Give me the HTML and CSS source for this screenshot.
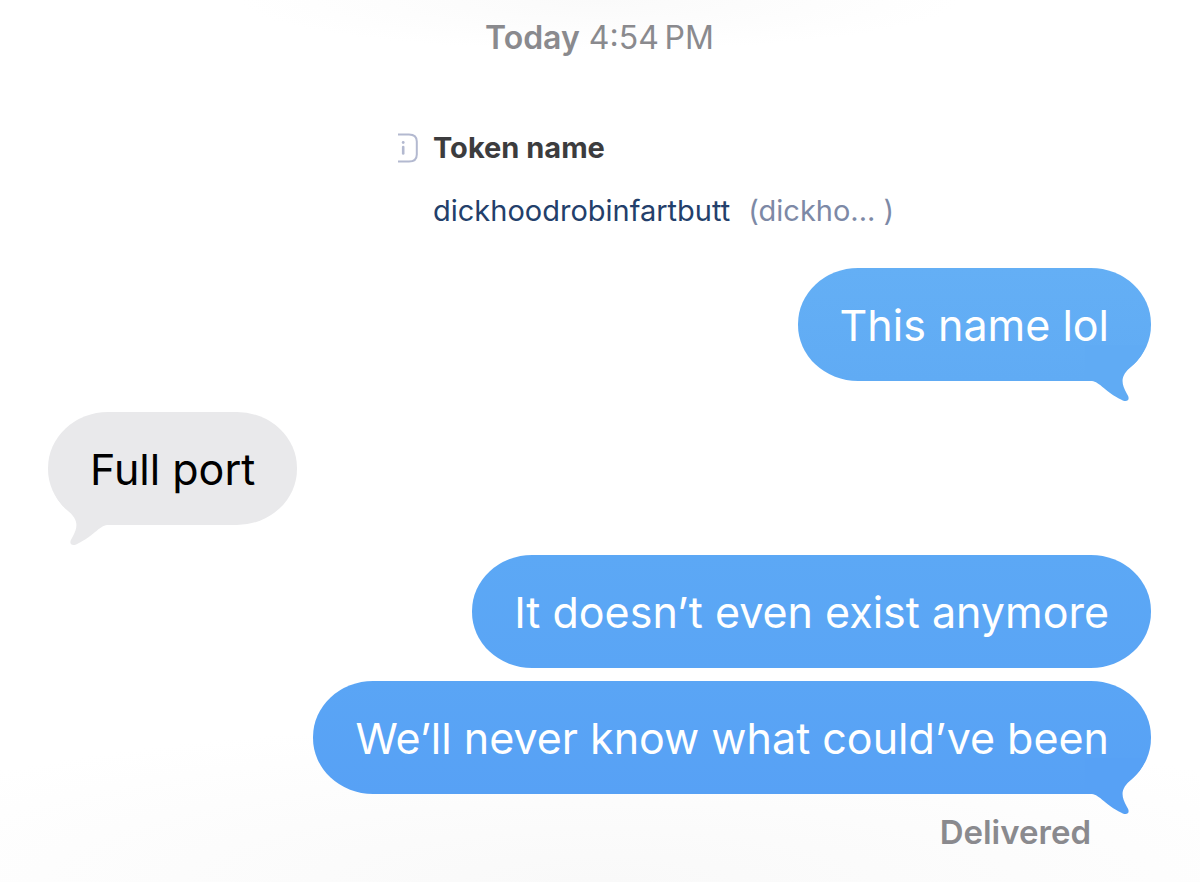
FILE: index.html
```html
<!DOCTYPE html>
<html lang="en">
<head>
  <meta charset="UTF-8">
  <meta name="viewport" content="width=device-width, initial-scale=1.0">
  <title>Messages</title>
  <link rel="stylesheet" href="styles.css">
</head>
<body>

  <main class="thread">
    <p class="timestamp"><strong>Today</strong> <time>4:54&#8201;PM</time></p>

    <!-- Token card -->
    <section class="token">
      <svg class="token-icon" viewBox="0 0 21 30" aria-hidden="true">
        <path d="M0 1.5H11Q18.8 1.5 18.8 8.5V21.5Q18.8 28.5 11 28.5H0" fill="none" stroke="#b3b9d0" stroke-width="2"/>
        <circle cx="5.2" cy="9.5" r="1.4" fill="#b3b9d0"/>
        <path d="M5.2 14V20.5" stroke="#b3b9d0" stroke-width="2.6" stroke-linecap="round"/>
      </svg>
      <h2 class="token-title">Token name</h2>
      <p class="token-value">
        <span class="token-full">dickhoodrobinfartbutt</span>
        <span class="token-short">(dickho... )</span>
      </p>
    </section>

    <!-- Messages -->
    <ol class="messages">
      <li class="bubble sent first">
        This name lol
        <svg class="tail" viewBox="0 0 66 56" aria-hidden="true">
          <path d="M0 0H61C59 7 54 15 47 21C36 30 35 37 42 49C46 55 42 58 36 54.500C22 48 14 36.500 7 36H0Z"/>
        </svg>
      </li>
      <li class="bubble received">
        Full port
        <svg class="tail" viewBox="0 0 66 56" aria-hidden="true">
          <path d="M0 0H61C59 7 54 15 47 21C36 30 35 37 42 49C46 55 42 58 36 54.500C22 48 14 36.500 7 36H0Z"/>
        </svg>
      </li>
      <li class="bubble sent second">It doesn’t even exist anymore</li>
      <li class="bubble sent third">
        We’ll never know what could’ve been
        <svg class="tail" viewBox="0 0 66 56" aria-hidden="true">
          <path d="M0 0H61C59 7 54 15 47 21C36 30 35 37 42 49C46 55 42 58 36 54.500C22 48 14 36.500 7 36H0Z"/>
        </svg>
      </li>
    </ol>

    <p class="status">Delivered</p>
  </main>

</body>
</html>
```

FILE: styles.css
```css
* {
  box-sizing: border-box;
}

body {
  margin: 0;
  min-height: 100vh;
  font-family: Inter, "Liberation Sans", sans-serif;
  background:
    radial-gradient(ellipse 30% 50px at top, #fafafa, transparent),
    radial-gradient(ellipse 70% 160px at bottom, #f9f9f9, transparent),
    #fff;
}

h2, p, ol {
  margin: 0;
  padding: 0;
}

.thread {
  padding: 18px 49px 30px 48px;
}

/* Timestamp and delivery status */
.timestamp,
.status {
  line-height: 40px;
  color: #8a8a8e;
}

.timestamp {
  font-size: 32px;
  text-align: center;
}

.timestamp strong,
.status {
  font-weight: 600;
}

.status {
  margin: 18px 60px 0;
  font-size: 33px;
  text-align: right;
}

/* Token card */
.token {
  display: grid;
  grid-template-columns: 21px 1fr;
  column-gap: 14px;
  row-gap: 23px;
  align-items: center;
  margin: 70px 0 37px 350px;
  font-size: 29px;
  line-height: 40px;
}

.token-icon {
  width: 21px;
  height: 30px;
}

.token-title {
  font-size: 29px;
  font-weight: 700;
  color: #3c3c3e;
}

.token-value {
  display: flex;
  gap: 18px;
  grid-column: 2;
}

.token-full {
  color: #233f6b;
}

.token-short {
  color: #7d89a6;
}

/* Bubbles */
.messages {
  display: flex;
  flex-direction: column;
  list-style: none;
}

.bubble {
  position: relative;
  padding: 31px 42px 29px;
  border-radius: 60px / 56px;
  font-size: 43px;
  line-height: 53px;
}

.sent {
  align-self: flex-end;
  color: #fff;
}

.received {
  align-self: flex-start;
  margin: 31px 0 30px;
  background: #e9e9eb;
  color: #000;
}

.first {
  background: linear-gradient(#64aff5, #60abf4);
}

.second {
  background: linear-gradient(#5ca8f5, #5aa5f5);
}

.third {
  margin-top: 13px;
  background: linear-gradient(#5aa5f5, #57a1f5);
}

/* Tail hangs below the bubble's outer corner */
.tail {
  position: absolute;
  right: 0;
  bottom: -20px;
  width: 66px;
  height: 56px;
}

.first .tail {
  fill: #60abf4;
}

.third .tail {
  fill: #57a1f5;
}

.received .tail {
  right: auto;
  left: 0;
  transform: scaleX(-1);
  fill: #e9e9eb;
}
```
